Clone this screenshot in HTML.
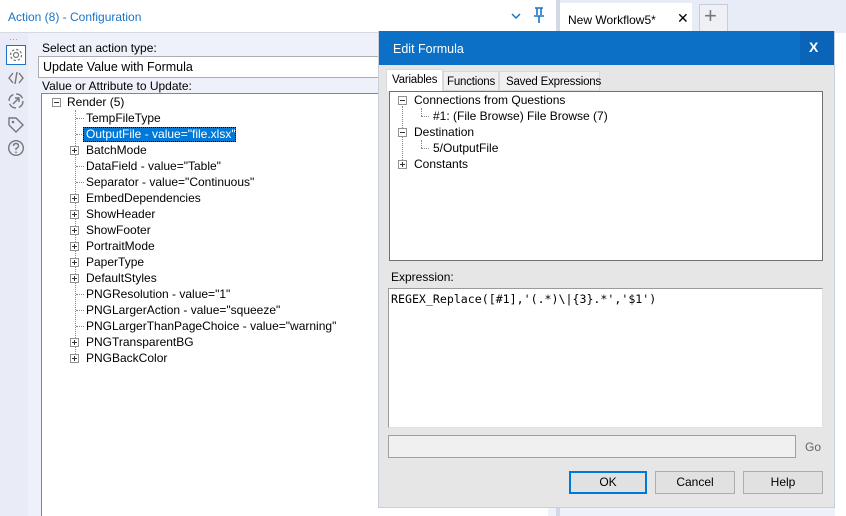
<!DOCTYPE html>
<html><head><meta charset="utf-8"><style>
*{margin:0;padding:0;box-sizing:border-box}
body{width:846px;height:516px;overflow:hidden;background:#eef1f9;font-family:"Liberation Sans",sans-serif;font-size:12px;color:#000;position:relative}
.a{position:absolute}
.t{position:absolute;white-space:nowrap;font-size:12px;line-height:14px}
.pm{position:absolute;width:9px;height:9px;border:1px solid #919191;background:#fff}
.pm:before{content:"";position:absolute;left:1px;top:3px;width:5px;height:1px;background:#333}
.pm.p:after{content:"";position:absolute;left:3px;top:1px;width:1px;height:5px;background:#333}
.dh{position:absolute;border-top:1px dotted #888;width:8px}
.dv{position:absolute;border-left:1px dotted #888}
.btn{position:absolute;height:23px;border:1px solid #adadad;background:#e1e1e1;text-align:center;line-height:21px;font-size:12px}
.tab{font-size:11.5px;letter-spacing:-0.2px}
</style></head><body>
<!-- header -->
<div class="a" style="left:0;top:0;width:556px;height:33px;background:#fff;border-bottom:1px solid #d6d9e2"></div>
<div class="t" style="left:8px;top:10px;color:#1a73c8;font-size:12px">Action (8) - Configuration</div>
<svg class="a" style="left:510px;top:11px" width="12" height="10"><path d="M2 3 L6 7 L10 3" stroke="#1a73c8" stroke-width="1.5" fill="none"/></svg>
<svg class="a" style="left:532px;top:7px" width="14" height="18"><path d="M3 1 H11 M5 1 V8 M9 1 V8 M2 9 H12 M7 9 V16" stroke="#1a73c8" stroke-width="1.6" fill="none"/></svg>
<div class="a" style="left:556px;top:0;width:4px;height:516px;background:#d3d8e6"></div>
<div class="a" style="left:560px;top:0;width:286px;height:33px;background:#e8ecf6"></div>
<div class="a" style="left:560px;top:3px;width:132px;height:30px;background:#fff"></div>
<div class="t" style="left:568px;top:13px">New Workflow5*</div>
<div class="t" style="left:677px;top:11px;font-size:14px">✕</div>
<div class="a" style="left:699px;top:4px;width:29px;height:29px;border:1px solid #c8ccd8;border-bottom:none;background:#eef0f6"></div>
<div class="t" style="left:704px;top:5px;font-size:22px;line-height:22px;color:#777">+</div>
<div class="a" style="left:835px;top:33px;width:11px;height:483px;background:#fff"></div>
<!-- sidebar -->
<div class="a" style="left:0;top:33px;width:28px;height:483px;background:#e9ecf6"></div>
<div class="t" style="left:9px;top:32px;color:#999;font-size:9px">···</div>
<div class="a" style="left:6px;top:45px;width:20px;height:20px;border:1px solid #1a73c8;background:#fff"></div>
<svg class="a" style="left:8px;top:47px" width="16" height="16"><circle cx="8" cy="8" r="2.5" fill="none" stroke="#777" stroke-width="1.2"/><circle cx="8" cy="8" r="5.5" fill="none" stroke="#777" stroke-width="1.2" stroke-dasharray="2.5 1.8"/></svg>
<svg class="a" style="left:7px;top:70px" width="18" height="16"><path d="M6 3 L2 8 L6 13 M12 3 L16 8 L12 13 M10 2 L8 14" stroke="#777" stroke-width="1.4" fill="none"/></svg>
<svg class="a" style="left:7px;top:92px" width="18" height="18"><circle cx="9" cy="9" r="7" fill="none" stroke="#777" stroke-width="1.4" stroke-dasharray="8 3"/><path d="M6 12 L12 6 M8 6 H12 V10" stroke="#777" stroke-width="1.4" fill="none"/></svg>
<svg class="a" style="left:7px;top:116px" width="18" height="18"><path d="M2 2 H9 L16 9 L9 16 L2 9 Z" fill="none" stroke="#777" stroke-width="1.4"/><circle cx="6" cy="6" r="1.3" fill="#777"/></svg>
<svg class="a" style="left:7px;top:139px" width="18" height="18"><circle cx="9" cy="9" r="7.3" fill="none" stroke="#777" stroke-width="1.4"/><path d="M6.5 7 Q6.5 4.5 9 4.5 Q11.5 4.5 11.5 7 Q11.5 8.5 9 9.5 V11" stroke="#777" stroke-width="1.4" fill="none"/><circle cx="9" cy="13.3" r="0.9" fill="#777"/></svg>
<!-- panel -->
<div class="t" style="left:42px;top:41px">Select an action type:</div>
<div class="a" style="left:38px;top:56px;width:510px;height:22px;border:1px solid #abadb3;background:#fff"></div>
<div class="t" style="left:43px;top:60px;font-size:12.5px">Update Value with Formula</div>
<div class="t" style="left:42px;top:79px">Value or Attribute to Update:</div>
<div class="a" style="left:41px;top:93px;width:507px;height:423px;border-left:1px solid #828790;border-top:1px solid #828790;background:#fff"></div>
<div class="pm" style="left:52px;top:98px"></div>
<div class="t" style="left:67px;top:95px">Render (5)</div>
<div class="dv" style="left:75px;top:110px;height:252px"></div>
<div class="dh" style="left:76px;top:118px"></div><div class="t" style="left:86px;top:111px">TempFileType</div>
<div class="dh" style="left:76px;top:134px"></div>
<div class="a" style="left:83px;top:127px;width:153px;height:15px;background:#0078d7;border:1px dotted #000"></div>
<div class="t" style="left:86px;top:127px;color:#fff">OutputFile - value="file.xlsx"</div>
<div class="pm p" style="left:70px;top:146px"></div><div class="t" style="left:86px;top:143px">BatchMode</div>
<div class="dh" style="left:76px;top:166px"></div><div class="t" style="left:86px;top:159px">DataField - value="Table"</div>
<div class="dh" style="left:76px;top:182px"></div><div class="t" style="left:86px;top:175px">Separator - value="Continuous"</div>
<div class="pm p" style="left:70px;top:194px"></div><div class="t" style="left:86px;top:191px">EmbedDependencies</div>
<div class="pm p" style="left:70px;top:210px"></div><div class="t" style="left:86px;top:207px">ShowHeader</div>
<div class="pm p" style="left:70px;top:226px"></div><div class="t" style="left:86px;top:223px">ShowFooter</div>
<div class="pm p" style="left:70px;top:242px"></div><div class="t" style="left:86px;top:239px">PortraitMode</div>
<div class="pm p" style="left:70px;top:258px"></div><div class="t" style="left:86px;top:255px">PaperType</div>
<div class="pm p" style="left:70px;top:274px"></div><div class="t" style="left:86px;top:271px">DefaultStyles</div>
<div class="dh" style="left:76px;top:294px"></div><div class="t" style="left:86px;top:287px">PNGResolution - value="1"</div>
<div class="dh" style="left:76px;top:310px"></div><div class="t" style="left:86px;top:303px">PNGLargerAction - value="squeeze"</div>
<div class="dh" style="left:76px;top:326px"></div><div class="t" style="left:86px;top:319px">PNGLargerThanPageChoice - value="warning"</div>
<div class="pm p" style="left:70px;top:338px"></div><div class="t" style="left:86px;top:335px">PNGTransparentBG</div>
<div class="pm p" style="left:70px;top:354px"></div><div class="t" style="left:86px;top:351px">PNGBackColor</div>
<!-- dialog -->
<div class="a" style="left:378px;top:31px;width:457px;height:477px;background:#e6e6e6;border:1px solid #c8cfdc"></div>
<div class="a" style="left:379px;top:31px;width:455px;height:34px;background:#0c70c6"></div>
<div class="a" style="left:800px;top:31px;width:34px;height:34px;background:#0a65b8"></div>
<div class="t" style="left:393px;top:42px;color:#fff;font-size:12.5px">Edit Formula</div>
<div class="t" style="left:809px;top:40px;color:#fff;font-size:14px;font-weight:bold">X</div>
<div class="a" style="left:386px;top:69px;width:57px;height:22px;background:#fff;border:1px solid #d9d9d9;border-bottom:none"></div>
<div class="t tab" style="left:392px;top:73px">Variables</div>
<div class="a" style="left:443px;top:71px;width:56px;height:20px;background:#f0f0f0;border:1px solid #d9d9d9"></div>
<div class="t tab" style="left:447px;top:75px">Functions</div>
<div class="a" style="left:499px;top:71px;width:101px;height:20px;background:#f0f0f0;border:1px solid #d9d9d9"></div>
<div class="t tab" style="left:506px;top:75px">Saved Expressions</div>
<div class="a" style="left:389px;top:91px;width:434px;height:170px;background:#fff;border:1px solid #707070"></div>
<div class="pm" style="left:398px;top:96px"></div><div class="t" style="left:414px;top:93px">Connections from Questions</div>
<div class="dv" style="left:402px;top:106px;height:56px"></div>
<div class="dv" style="left:421px;top:108px;height:8px"></div><div class="dh" style="left:421px;top:116px"></div>
<div class="t" style="left:433px;top:109px">#1: (File Browse) File Browse (7)</div>
<div class="pm" style="left:398px;top:128px"></div><div class="t" style="left:414px;top:125px">Destination</div>
<div class="dv" style="left:421px;top:140px;height:8px"></div><div class="dh" style="left:421px;top:148px"></div>
<div class="t" style="left:433px;top:141px">5/OutputFile</div>
<div class="pm p" style="left:398px;top:160px"></div><div class="t" style="left:414px;top:157px">Constants</div>
<div class="t" style="left:391px;top:270px">Expression:</div>
<div class="a" style="left:388px;top:288px;width:435px;height:140px;background:#fff;border:1px solid #9a9a9a;border-right-color:#e0e0e0;border-bottom-color:#e0e0e0"></div>
<div class="t" style="left:391px;top:292px;font-family:'DejaVu Sans Mono','Liberation Mono',monospace;font-size:11.6px">REGEX_Replace([#1],'(.*)\|{3}.*','$1')</div>
<div class="a" style="left:388px;top:435px;width:408px;height:23px;background:#f0f0f0;border:1px solid #a0a0a0"></div>
<div class="t" style="left:805px;top:440px;color:#666">Go</div>
<div class="btn" style="left:569px;top:471px;width:78px;border:2px solid #0078d7;line-height:19px">OK</div>
<div class="btn" style="left:655px;top:471px;width:80px">Cancel</div>
<div class="btn" style="left:743px;top:471px;width:80px">Help</div>
</body></html>
